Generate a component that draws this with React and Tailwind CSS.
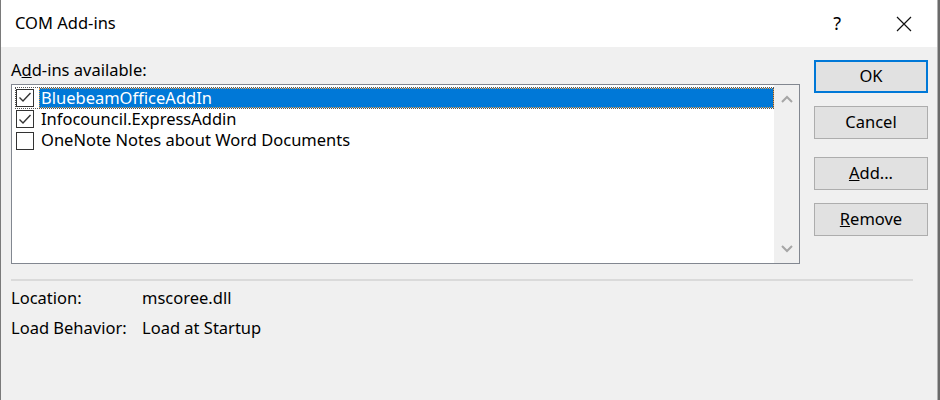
import React from "react";

const Check = () => (
  <svg width="14" height="13" viewBox="0 0 14 13" className="block">
    <path d="M1.5 6.5 L5 10 L12.5 2" fill="none" stroke="#333" strokeWidth="1.4" />
  </svg>
);

function Box({ checked }) {
  return (
    <div className="w-[18px] h-[18px] border border-[#333] bg-white flex items-center justify-center">
      {checked && <Check />}
    </div>
  );
}

function Btn({ children, primary, className = "" }) {
  return (
    <div
      className={
        "w-[114px] h-[33px] flex items-center justify-center bg-[#e1e1e1] text-[16.5px] text-black " +
        (primary ? "border-2 border-[#0078d7] " : "border border-[#adadad] ") +
        className
      }
    >
      {children}
    </div>
  );
}

export default function App() {
  return (
    <div
      className="w-[940px] h-[400px] bg-[#f0f0f0] border-l border-[#7a7a7a] flex flex-col relative overflow-hidden"
      style={{ fontFamily: '"Noto Sans", "Open Sans", sans-serif' }}
    >
      <div className="absolute right-0 top-0 h-full w-[3px] flex">
        <div className="w-px h-full bg-[#b0b0b0]" />
        <div className="w-[2px] h-full bg-[#6a6a6a]" />
      </div>
      {/* title bar */}
      <div className="h-[47px] bg-white flex items-center pl-[14px] pr-[28px] shrink-0">
        <div className="text-[16.5px] text-black flex-1">COM Add-ins</div>
        <div className="text-[18px] text-black mr-[55px]">?</div>
        <svg width="16" height="16" viewBox="0 0 16 16">
          <path d="M1 1 L15 15 M15 1 L1 15" stroke="#111" strokeWidth="1.2" />
        </svg>
      </div>

      {/* body */}
      <div className="flex pl-[10px] pt-[13px]">
        <div className="w-[789px] flex flex-col">
          <div className="text-[16.5px] text-black h-[24px] leading-[20px]">
            A<span className="underline">d</span>d-ins available:
          </div>
          <div className="h-[180px] border border-[#828790] bg-white flex">
            <div className="flex-1 pt-[2px] pl-[3px] flex flex-col">
              <div className="h-[21.5px] flex items-center outline-1 outline-dotted outline-[#555] -outline-offset-1">
                <div className="w-[24px] flex items-center justify-start pl-[1px]">
                  <Box checked />
                </div>
                <div className="flex-1 h-[20px] bg-[#0078d7] text-white text-[16.5px] leading-[20px] pl-[2px] outline-1 outline-dotted outline-[#e8a04a] -outline-offset-1">
                  BluebeamOfficeAddIn
                </div>
              </div>
              <div className="h-[21.5px] flex items-center">
                <div className="w-[24px] pl-[1px]">
                  <Box checked />
                </div>
                <div className="text-[16.5px] text-black pl-[2px]">Infocouncil.ExpressAddin</div>
              </div>
              <div className="h-[21.5px] flex items-center">
                <div className="w-[24px] pl-[1px]">
                  <Box />
                </div>
                <div className="text-[16.5px] text-black pl-[2px]">OneNote Notes about Word Documents</div>
              </div>
            </div>
            <div className="w-[25px] bg-[#f0f0f0] flex flex-col items-center justify-between py-[10px]">
              <svg width="12" height="8" viewBox="0 0 12 8">
                <path d="M1 7 L6 2 L11 7" fill="none" stroke="#a6a6a6" strokeWidth="2" />
              </svg>
              <svg width="12" height="8" viewBox="0 0 12 8">
                <path d="M1 1 L6 6 L11 1" fill="none" stroke="#a6a6a6" strokeWidth="2" />
              </svg>
            </div>
          </div>
        </div>
        <div className="ml-[14px] flex flex-col">
          <Btn primary>OK</Btn>
          <Btn className="mt-[13px]">Cancel</Btn>
          <Btn className="mt-[18px]">
            <span>
              <span className="underline">A</span>dd...
            </span>
          </Btn>
          <Btn className="mt-[13px]">
            <span>
              <span className="underline">R</span>emove
            </span>
          </Btn>
        </div>
      </div>

      <div className="ml-[10px] w-[902px] h-[2px] bg-[#dadada] mt-[15px]" />

      <div className="pl-[10px] pt-[7px] text-[16.5px] text-black flex flex-col gap-[10px]">
        <div className="flex h-[20px] items-center">
          <div className="w-[131px]">Location:</div>
          <div>mscoree.dll</div>
        </div>
        <div className="flex h-[20px] items-center">
          <div className="w-[131px]">Load Behavior:</div>
          <div>Load at Startup</div>
        </div>
      </div>
    </div>
  );
}
